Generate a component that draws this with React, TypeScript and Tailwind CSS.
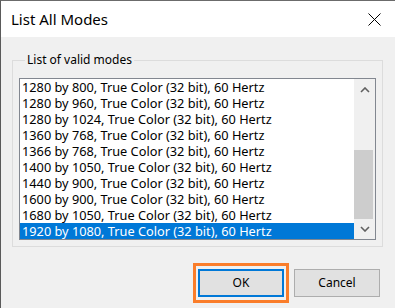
const modes = [
  "1280 by 800",
  "1280 by 960",
  "1280 by 1024",
  "1360 by 768",
  "1366 by 768",
  "1400 by 1050",
  "1440 by 900",
  "1600 by 900",
  "1680 by 1050",
  "1920 by 1080",
];

const selected = 9;

const ModeList = () => (
  <div className="mt-[10px] flex h-[162px] border border-[#828790] bg-white">
    <ul className="flex-1 overflow-hidden">
      {modes.map((mode, index) => (
        <li
          key={mode}
          className={
            index === selected
              ? "flex h-[16px] items-center whitespace-nowrap bg-[#0078d7] pl-[2px] text-[12.75px] leading-none text-white"
              : "flex h-[16px] items-center whitespace-nowrap pl-[2px] text-[12.75px] leading-none text-black"
          }
        >
          {mode}, True Color (32 bit), 60 Hertz
        </li>
      ))}
    </ul>
    <div className="flex w-[21px] flex-col bg-[#f0f0f0]">
      <div className="flex h-[21px] items-center justify-center">
        <svg width="10" height="6" viewBox="0 0 10 6">
          <path d="M1 5 L5 1 L9 5" fill="none" stroke="#606060" strokeWidth="1.6" />
        </svg>
      </div>
      <div className="mt-[50px] h-[69px] w-[19px] bg-[#cdcdcd]" />
      <div className="flex flex-1 items-center justify-center">
        <svg width="10" height="6" viewBox="0 0 10 6">
          <path d="M1 1 L5 5 L9 1" fill="none" stroke="#606060" strokeWidth="1.6" />
        </svg>
      </div>
    </div>
  </div>
);

export default function App() {
  return (
    <div
      className="flex h-[308px] w-[395px] flex-col overflow-hidden border-l border-t border-l-[#5a5a5a] border-t-[#6b6b6b] bg-[#f0f0f0] text-black"
      style={{ fontFamily: '"Noto Sans", "Open Sans", sans-serif' }}
    >
      <header className="flex h-[36px] shrink-0 items-center justify-between bg-white pl-[10px] pr-[14px]">
        <h1 className="text-[15px] leading-[20px]">List All Modes</h1>
        <svg width="13" height="13" viewBox="0 0 13 13">
          <path d="M0.5 0.5 L12.5 12.5 M12.5 0.5 L0.5 12.5" stroke="#000" strokeWidth="1" />
        </svg>
      </header>

      <fieldset className="ml-[11px] mt-[15px] w-[371px] border border-[#dcdcdc] px-[6px] pb-[6px]">
        <legend className="ml-[6px] px-[2px] text-[12px] leading-[16px]">List of valid modes</legend>
        <ModeList />
      </fieldset>

      <div className="mt-[16px] flex items-center justify-end gap-[5px] pr-[15px]">
        <div className="border-[3px] border-[#fa7d2a] px-[2px] py-[3px]">
          <button className="h-[28px] w-[86px] border-2 border-[#0078d7] bg-[#e1e1e1] text-[12px]">
            OK
          </button>
        </div>
        <button className="h-[28px] w-[86px] border border-[#adadad] bg-[#e1e1e1] text-[12px]">
          Cancel
        </button>
      </div>
    </div>
  );
}
